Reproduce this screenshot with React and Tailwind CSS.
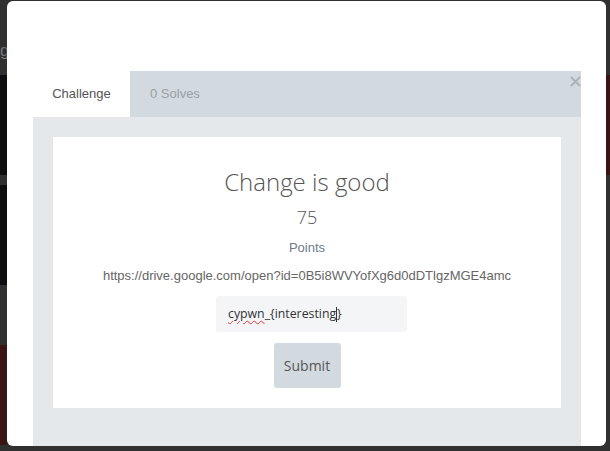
import React from 'react';

export default function App() {
    return (
        <div className="relative w-[610px] h-[451px] overflow-hidden bg-[#303030] font-['Liberation_Sans',Arial,sans-serif]">
            {/* page behind the modal */}
            <div className="absolute left-0 top-[38px] text-[17px] text-[#777]">ge</div>
            <div className="absolute left-0 top-[75px] w-[7px] h-[100px] bg-[#0c0e12]" />
            <div className="absolute left-0 top-[185px] w-[7px] h-[100px] bg-[#0c0e12]" />
            <div className="absolute left-0 top-[345px] w-[7px] h-[100px] bg-[#3a1414]" />
            <div className="absolute right-0 top-[75px] w-[4px] h-[100px] bg-[#3a1414]" />

            <div className="relative pt-[1px] pl-[7px]">
                <div className="w-[599px] h-[445px] bg-white rounded-[6px] overflow-hidden flex flex-col pt-[70px] pl-[26px] pr-[25px]">
                    {/* tabs */}
                    <div className="relative flex h-[46px] bg-[#d2dae0] shrink-0">
                        <div className="w-[97px] bg-white flex items-center justify-center text-[13px] text-[#555]">
                            Challenge
                        </div>
                        <div className="flex items-center pl-[20px] text-[13px] text-[#9aa0a6]">
                            0 Solves
                        </div>
                        <svg className="absolute right-0 top-[5px]" width="11" height="11" viewBox="0 0 11 11">
                            <path d="M1 1L10 10M10 1L1 10" stroke="#acb2b6" strokeWidth="2" />
                        </svg>
                    </div>

                    {/* panel */}
                    <div className="flex-1 bg-[#e4e8eb] p-[20px]">
                        <div className="bg-white h-[271px] flex flex-col items-center pt-[29px]">
                            <h2 className="font-['Open_Sans',sans-serif] font-light text-[24px] leading-[32px] text-[#555]">
                                Change is good
                            </h2>
                            <div className="mt-[7px] font-['Open_Sans',sans-serif] font-light text-[18px] leading-[24px] text-[#555]">
                                75
                            </div>
                            <div className="mt-[10px] text-[13px] leading-[18px] text-[#6c7a8c]">Points</div>
                            <div className="mt-[10px] text-[13px] leading-[18px] text-[#666]">
                                https://drive.google.com/open?id=0B5i8WVYofXg6d0dDTlgzMGE4amc
                            </div>
                            <div className="mt-[11px] ml-[9px] w-[191px] h-[36px] rounded-[3px] bg-[#f4f5f7] px-[12px] flex items-center font-['Open_Sans',sans-serif] text-[12.3px] text-[#333]">
                                <span className="underline decoration-wavy decoration-[#e33] decoration-1 underline-offset-2">cypwn</span>
                                <span>_{'{'}interesting</span>
                                <span className="w-px h-[15px] bg-[#333]" />
                                <span>{'}'}</span>
                            </div>
                            <button className="mt-[11px] w-[67px] h-[45px] rounded-[3px] bg-[#d2dae0] font-['Open_Sans',sans-serif] text-[14px] text-[#555]">
                                Submit
                            </button>
                        </div>
                    </div>
                </div>
            </div>
        </div>
    );
}
